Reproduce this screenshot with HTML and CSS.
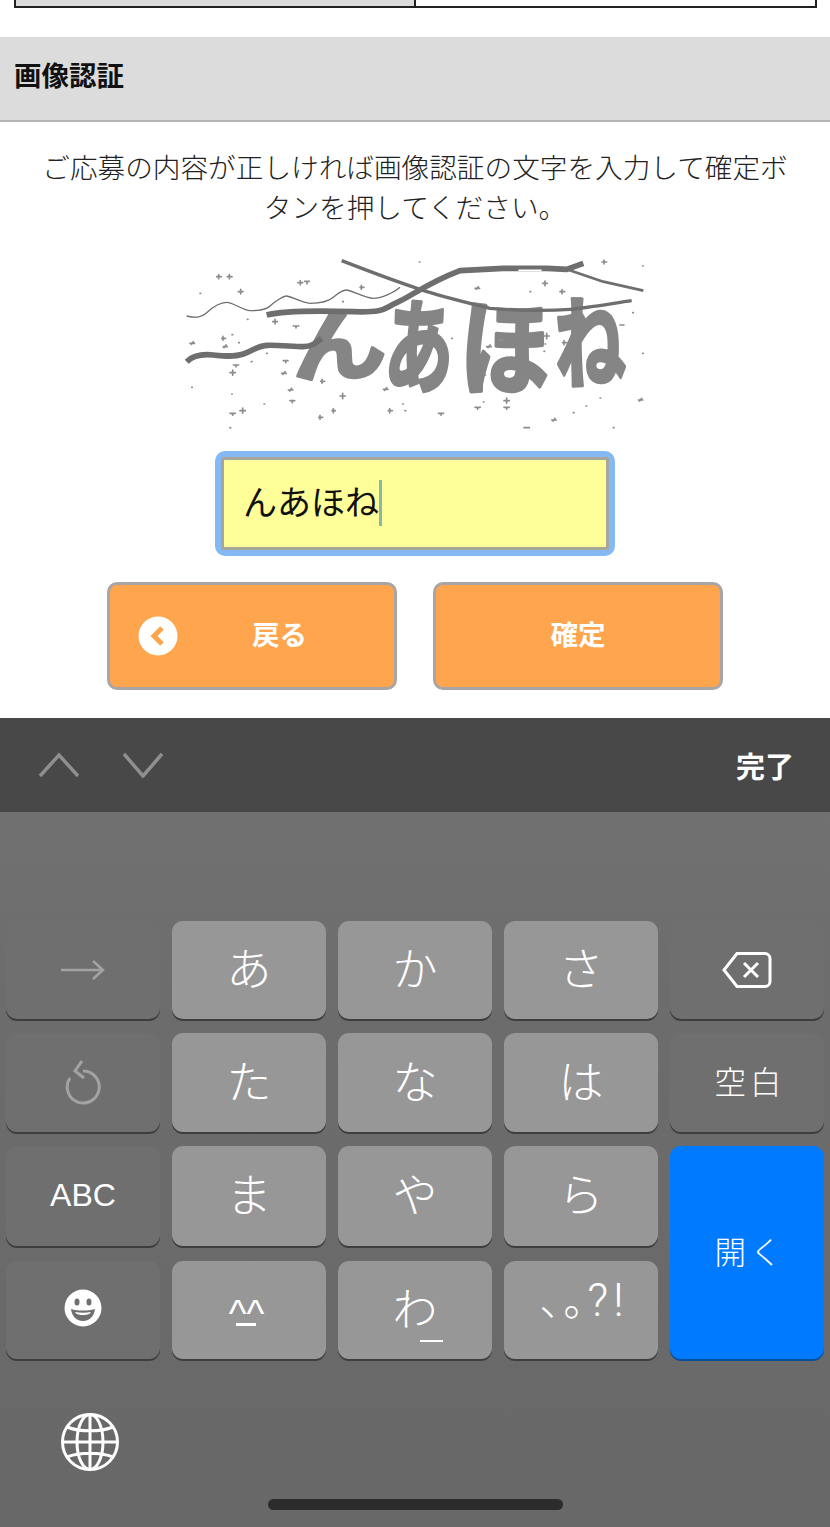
FILE: index.html
```html
<!DOCTYPE html>
<html lang="ja">
<head>
<meta charset="utf-8">
<title>画像認証</title>
<link rel="stylesheet" href="styles.css">
</head>
<body>
<main class="page">
  <div class="table-end"><div class="cell-gray"></div><div class="cell-white"></div></div>
  <h2 class="section-title">画像認証</h2>
  <p class="lead">ご応募の内容が正しければ画像認証の文字を入力して確定ボタンを押してください。</p>
  <svg class="captcha" viewBox="0 0 1470 600" role="img" aria-label="画像認証">
    <g class="cap-text">
      <text transform="translate(368 408) rotate(-2) scale(1.05 .88)">ん</text>
      <text transform="translate(640 428) rotate(3) scale(.76 1.14)">あ</text>
      <text transform="translate(868 438) rotate(1) scale(1 1.16)">ほ</text>
      <text transform="translate(1158 424) rotate(-2) scale(.78 1.12)">ね</text>
    </g>
    <g class="cap-lines">
      <path class="w9" d="M515 62C600 95 680 125 750 148S880 185 960 205C1050 212 1150 212 1200 208S1340 188 1385 182"/>
      <path class="w14" d="M290 225C340 212 450 212 550 215S640 205 680 188S770 130 870 92L1000 85L1130 85L1190 88L1240 70"/>
      <path class="w7" d="M1190 88L1300 125L1420 152"/>
      <path class="w3" d="M50 228C80 235 95 232 110 218S150 187 170 187S220 212 240 212S285 212 300 198S340 168 350 168S400 190 420 190S470 190 490 172S520 150 530 150S590 175 610 175S670 160 690 142"/>
      <path class="w14" d="M50 365C70 345 100 342 130 345S190 352 220 342S260 318 290 316S370 320 400 320S440 305 455 295"/>
      <path class="gap" d="M1045 91H1115"/>
    </g>
    <path class="cap-dots" d="M140 110h14m-8-6v12M172 110h14m-8-6v12M384 128h14m-7-6v12M404 124h14m-7 0v8M205 155h14M212 148v14M90 160h2M748 66h2M1296 66h14m-8-6v12M1418 78h2M1118 130h14M1125 123v14M1170 155h14m-8-6v12M915 145h14m-4-5l-6 8M1080 155h2M308 245h14M315 238v14M370 258h16m-8 0v6M155 295h12m-8-6v12M60 310h14m-4-5l-6 8M160 320h12m-4-5l-6 8M340 362h14m-7 0v6M190 375h16m-8 0v6M180 398h16M188 390v16M335 400h14m-4-5l-6 8M65 442h2M452 424h12m-8-6v12M355 450h14m-4-5l-6 8M360 482h14m-7 0v6M185 462h2M510 468h16M518 460v16M640 448h14m-4-5l-6 8M282 492h2M180 520h16m-8 0v6M210 512h16M218 504v16M446 532h12m-8-6v12M486 512h10m-6-6v12M655 512h12m-8-6v12M698 492h2M705 512h2M805 520h16m-8 0v6M915 502h16m-8 0v6M940 486h2M1002 482h16M1010 474v16M1002 502h16m-8 0v6M1062 563h16M1145 540h14m-4-5l-6 8M1210 518h2M1248 498h2M1290 474h2M1330 563h2M1405 480h14m-4-5l-6 8M1418 340h2M1122 288h16M1130 280v16M1178 308h12m-8-6v12M1125 312h2M1122 334h2M180 563h2M845 295h2M945 405h2M985 300h16m-4-5l-6 8M950 320h14m-4-5l-6 8M232 238h2M186 284h2M206 308h2M244 365h2M290 340h2M1350 255h12M1388 218h2M570 142h12m-8-6v12M518 185h2"/>
  </svg>
  <div class="answer"><div class="answer-box"><span class="answer-text">んあほね</span><span class="caret"></span></div></div>
  <div class="actions">
    <button class="btn btn-back" type="button">
      <svg class="back-icon" viewBox="0 0 40 40"><circle cx="20" cy="20" r="19.5"/><path d="M24 12l-8 8 8 8"/></svg>
      <span>戻る</span>
    </button>
    <button class="btn" type="button"><span>確定</span></button>
  </div>
  <div class="accessory">
    <svg class="chev" viewBox="0 0 40 26"><path d="M1 24L20 3l19 21"/></svg>
    <svg class="chev chev-next" viewBox="0 0 40 26"><path d="M1 2l19 22L39 2"/></svg>
    <span class="done">完了</span>
  </div>
  <section class="keyboard">
    <div class="keys">
      <div class="key dark"><svg class="ic-arrow" viewBox="0 0 44 20"><path d="M0 10H42M32 1l10 9-10 9"/></svg></div>
      <div class="key kana">あ</div>
      <div class="key kana">か</div>
      <div class="key kana">さ</div>
      <div class="key dark"><svg class="ic-del" viewBox="0 0 50 36"><path d="M15 1.500H43a5 5 0 0 1 5 5V29.500a5 5 0 0 1-5 5H15L2 18z"/><path d="M22 11l14 14M36 11L22 25"/></svg></div>
      <div class="key dark"><svg class="ic-undo" viewBox="0 0 36 46"><path d="M18 11A16 16 0 1 1 5 18"/><path d="M17 1L10 11l9 7"/></svg></div>
      <div class="key kana">た</div>
      <div class="key kana">な</div>
      <div class="key kana">は</div>
      <div class="key dark label-ja">空白</div>
      <div class="key dark label-abc">ABC</div>
      <div class="key kana">ま</div>
      <div class="key kana">や</div>
      <div class="key kana">ら</div>
      <div class="key blue label-ja">開く</div>
      <div class="key dark ic-up"><svg class="ic-emoji" viewBox="0 0 38 38"><circle class="face" cx="19" cy="19" r="18.500"/><ellipse class="feat" cx="13" cy="13" rx="2.500" ry="3.500"/><ellipse class="feat" cx="25" cy="13" rx="2.500" ry="3.500"/><path class="feat" d="M7 20c7 2 17 2 24 0-1 8-6 12-12 12S8 28 7 20z"/><path class="face" d="M11 23c5 1 11 1 16 0-1 2-3 3-8 3s-7-1-8-3z"/></svg></div>
      <div class="key kana"><span class="kao">^^<span class="kao-bar"></span></span></div>
      <div class="key kana">わ<span class="wa-bar"></span></div>
      <div class="key kana punct"><span class="punct-ja">、。</span><span class="punct-en">?!</span></div>
    </div>
    <div class="kb-bottom">
      <svg class="ic-globe" viewBox="0 0 58 58"><circle cx="29" cy="29" r="27.500"/><ellipse cx="29" cy="29" rx="13" ry="27.500"/><path d="M29 1.500V56.500M1.500 29H56.500M6 14c12 5 34 5 46 0M6 44c12-5 34-5 46 0"/></svg>
    </div>
    <div class="home-bar"></div>
  </section>
</main>
</body>
</html>
```

FILE: styles.css
```css
html, body {
  margin: 0;
  padding: 0;
  background: #fff;
}
body {
  font-family: "Noto Sans CJK JP", "Liberation Sans", sans-serif;
  color: #111;
}
.page {
  width: 830px;
  height: 1527px;
  overflow: hidden;
  display: flex;
  flex-direction: column;
}
.table-end {
  display: flex;
  width: 803px;
  height: 8px;
  margin: 0 0 0 14px;
  box-sizing: border-box;
  border: 2px solid #222;
  border-top: 0;
  flex: none;
}
.cell-gray {
  width: 398px;
  background: #dcdcdc;
  border-right: 2px solid #222;
}
.cell-white {
  flex: 1;
}
.section-title {
  flex: none;
  margin: 29px 0 0;
  height: 83px;
  padding-left: 14px;
  background: #dcdcdc;
  border-bottom: 2px solid #b4b4b4;
  font-size: 27.500px;
  font-weight: 700;
  line-height: 75px;
  color: #111;
}
.lead {
  flex: none;
  margin: 24px 35px 0;
  font-size: 27.650px;
  line-height: 40px;
  font-weight: 300;
  text-align: center;
  color: #222;
}
.captcha {
  flex: none;
  display: block;
  width: 490px;
  height: 200px;
  margin: 14px 0 0 170px;
}
.cap-text text {
  font-family: "Noto Sans CJK JP", sans-serif;
  font-size: 270px;
  font-weight: 700;
  fill: #858585;
  stroke: #858585;
  stroke-width: 10px;
  stroke-linejoin: round;
}
.cap-lines path {
  fill: none;
  stroke: #6e6e6e;
  stroke-linejoin: round;
}
.cap-lines .w14 { stroke-width: 17px; }
.cap-lines .w9 { stroke-width: 10px; }
.cap-lines .w7 { stroke-width: 8px; }
.cap-lines .w3 { stroke-width: 4px; }
.cap-lines .gap { stroke: #fff; stroke-width: 5px; }
.cap-dots {
  fill: none;
  stroke: #8c8c8c;
  stroke-width: 5px;
  stroke-linecap: round;
}
.answer {
  flex: none;
  margin-top: 11px;
  display: flex;
  justify-content: center;
}
.answer-box {
  position: relative;
  box-sizing: border-box;
  width: 400px;
  height: 105px;
  padding-left: 19px;
  display: flex;
  align-items: center;
  background: #ffff99;
  background-clip: padding-box;
  border: 9px solid #84b9f3;
  border-radius: 10px;
}
.answer-box::before {
  content: "";
  position: absolute;
  inset: -3px;
  border: 3px solid #a8a59a;
  border-radius: 2px;
  pointer-events: none;
}
.answer-text {
  font-size: 34px;
  line-height: 1;
  font-weight: 400;
  color: #111;
  position: relative;
  top: -3px;
}
.caret {
  display: block;
  width: 3px;
  height: 46px;
  background: #8ab8a8;
  position: relative;
  top: -1px;
}
.actions {
  flex: none;
  margin-top: 26px;
  padding-left: 107px;
  display: flex;
  gap: 36px;
}
.btn {
  position: relative;
  box-sizing: border-box;
  width: 290px;
  height: 108px;
  padding: 0 0 7px;
  background: #ffa54d;
  border: 3px solid #a9a5a5;
  border-radius: 10px;
  color: #fff;
  font-family: inherit;
  font-size: 27.500px;
  font-weight: 700;
  display: flex;
  align-items: center;
  justify-content: center;
}
.btn-back span {
  margin-left: 55px;
}
.back-icon {
  position: absolute;
  left: 28px;
  top: 31px;
  width: 40px;
  height: 40px;
}
.back-icon circle { fill: #fff; }
.back-icon path {
  fill: none;
  stroke: #ffa54d;
  stroke-width: 5px;
}
.accessory {
  flex: none;
  margin-top: 28px;
  height: 94px;
  background: #484848;
  display: flex;
  align-items: center;
  padding: 0 36px 0 39px;
}
.chev {
  width: 40px;
  height: 26px;
  fill: none;
  stroke: #8f8f8f;
  stroke-width: 3.500px;
}
.chev-next {
  margin-left: 44px;
}
.done {
  margin-left: auto;
  color: #fff;
  font-size: 29px;
  font-weight: 700;
}
.keyboard {
  flex: 1;
  background: linear-gradient(#717171 0, #6c6c6c 210px, #686868 100%);
  padding: 109px 0 0 6px;
  position: relative;
}
.keys {
  display: grid;
  grid-template-columns: repeat(5, 154px);
  grid-template-rows: 98px 98.600px 100px 98px;
  gap: 14.400px 12px;
}
.key {
  box-sizing: border-box;
  border-radius: 11px;
  box-shadow: 0 2px 0 #3e3e3e;
  display: flex;
  align-items: center;
  justify-content: center;
  color: #fff;
  position: relative;
}
.kana {
  background: #979797;
  font-size: 45px;
  font-weight: 300;
  padding-bottom: 7px;
}
.dark {
  background: #6f6f6f;
}
.blue {
  background: #007aff;
  grid-row: span 2;
  box-shadow: 0 2px 0 #0a4f9c;
}
.label-ja {
  font-size: 31.500px;
  font-weight: 300;
  letter-spacing: 4px;
  padding: 0 0 6px 6px;
}
.label-abc {
  font-family: "Liberation Sans", sans-serif;
  font-size: 32px;
  padding-bottom: 2px;
}
.ic-up {
  padding-bottom: 3px;
}
.ic-arrow {
  width: 44px;
  height: 20px;
  fill: none;
  stroke: #a3a3a3;
  stroke-width: 2.500px;
}
.ic-del {
  width: 50px;
  height: 36px;
  fill: none;
  stroke: #fff;
  stroke-width: 3px;
}
.ic-undo {
  width: 36px;
  height: 46px;
  fill: none;
  stroke: #a3a3a3;
  stroke-width: 3px;
}
.ic-emoji {
  width: 38px;
  height: 38px;
}
.ic-emoji .face { fill: #fff; }
.ic-emoji .feat { fill: #6f6f6f; }
.kao {
  display: inline-flex;
  flex-direction: column;
  align-items: center;
  font-family: "Liberation Sans", sans-serif;
  font-size: 38px;
  letter-spacing: 0;
  line-height: 30px;
  font-weight: 400;
  margin: 12px 5px 0 0;
}
.kao-bar {
  width: 20px;
  height: 3px;
  margin-top: -6px;
  background: #fff;
}
.wa-bar {
  position: absolute;
  left: 82px;
  top: 79px;
  width: 23px;
  height: 2px;
  background: #fff;
}
.punct {
  align-items: baseline;
  padding: 6px 0 0 6px;
}
.punct-ja {
  font-size: 42px;
  letter-spacing: -18px;
  text-spacing-trim: space-all;
}
.punct-en {
  font-family: "Roboto", "Liberation Sans", sans-serif;
  font-size: 46px;
  font-weight: 300;
  letter-spacing: 5px;
}
.kb-bottom {
  margin-top: 54px;
  padding-left: 55px;
}
.ic-globe {
  display: block;
  width: 58px;
  height: 58px;
  fill: none;
  stroke: #fff;
  stroke-width: 3px;
}
.home-bar {
  position: absolute;
  left: 268px;
  bottom: 17px;
  width: 295px;
  height: 11px;
  border-radius: 6px;
  background: #2c2c2c;
}
```
